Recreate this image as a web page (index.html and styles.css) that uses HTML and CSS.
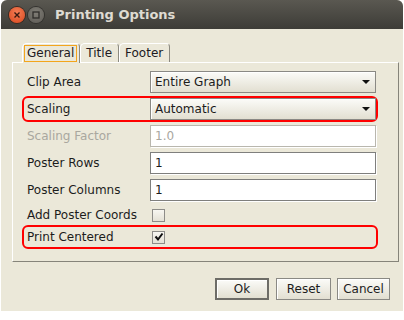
FILE: index.html
```html
<!DOCTYPE html>
<html lang="en">
<head>
  <meta charset="UTF-8" />
  <title>Printing Options</title>
  <link rel="stylesheet" href="styles.css">
</head>
<body>
  <div class="window">
    <div class="titlebar">
      <span class="wbtn close">
        <svg width="8" height="8" viewBox="0 0 8 8"><path d="M1.5 1.5 L6.5 6.5 M6.5 1.5 L1.5 6.5" stroke="#3a1a10" stroke-width="1.4"/></svg>
      </span>
      <span class="wbtn mini">
        <svg width="8" height="8" viewBox="0 0 8 8"><rect x="1" y="1" width="6" height="6" fill="none" stroke="#2e2d2a" stroke-width="1.3"/></svg>
      </span>
      <span class="title">Printing Options</span>
    </div>

    <div class="tabs">
      <div class="tab active"><span class="focus">General</span></div>
      <div class="tab">Title</div>
      <div class="tab">Footer</div>
    </div>

    <div class="panel">
      <div class="row">
        <label>Clip Area</label>
        <div class="combo">Entire Graph<span class="arrow"></span></div>
      </div>
      <div class="row marked">
        <label>Scaling</label>
        <div class="combo">Automatic<span class="arrow"></span></div>
      </div>
      <div class="row">
        <label class="disabled">Scaling Factor</label>
        <div class="field off">1.0</div>
      </div>
      <div class="row">
        <label>Poster Rows</label>
        <div class="field">1</div>
      </div>
      <div class="row">
        <label>Poster Columns</label>
        <div class="field">1</div>
      </div>
      <div class="row check-row first-check">
        <label>Add Poster Coords</label>
        <div><span class="check"></span></div>
      </div>
      <div class="row check-row marked">
        <label>Print Centered</label>
        <div>
          <span class="check">
            <svg width="10" height="10" viewBox="0 0 10 10"><path d="M1.5 4.5 L4 7.5 L8.5 1.5" fill="none" stroke="#111" stroke-width="2"/></svg>
          </span>
        </div>
      </div>
    </div>

    <div class="buttons">
      <button class="btn default">Ok</button>
      <button class="btn">Reset</button>
      <button class="btn">Cancel</button>
    </div>
  </div>
</body>
</html>
```

FILE: styles.css
```css
body {
  margin: 0;
  background: #fff;
  font-family: "DejaVu Sans", Verdana, sans-serif;
  font-size: 12px;
  color: #1c1c1c;
}
.window {
  margin-left: 1px;
  width: 402px;
  height: 311px;
  background: #ebe8d9;
  border-radius: 6px 6px 0 0;
  overflow: hidden;
}
.titlebar {
  height: 29px;
  display: flex;
  align-items: center;
  padding-left: 8px;
  background: linear-gradient(#5a5851, #3d3c37);
}
.wbtn {
  width: 16px;
  height: 16px;
  border-radius: 50%;
  display: flex;
  align-items: center;
  justify-content: center;
  margin-right: 3px;
}
.wbtn.close {
  background: radial-gradient(circle at 50% 35%, #f47e56, #d9461c);
  box-shadow: 0 0 0 1px #3a2a22;
}
.wbtn.mini {
  background: radial-gradient(circle at 50% 35%, #807d76, #5c5a54);
  box-shadow: 0 0 0 1px #33322e;
}
.title {
  margin-left: 8px;
  color: #dfdbd2;
  font-weight: bold;
  font-size: 13px;
}

.tabs {
  display: flex;
  margin: 14px 0 0 21px;
  position: relative;
  z-index: 1;
}
.tab {
  height: 18px;
  line-height: 18px;
  padding: 0 6px 0 5px;
  border-top: 1px solid #fff;
  border-left: 1px solid #fff;
  border-right: 1px solid #8c8a80;
  border-radius: 5px 4px 0 0;
  color: #201a22;
}
.tab.active {
  height: 19px;
  padding: 0 2px 0 1px;
  margin-bottom: -1px;
  background: #ebe8d9;
}
.focus {
  display: inline-block;
  line-height: 15px;
  padding: 0 2px;
  border: 1px solid #f3a51c;
}

.panel {
  margin-left: 11px;
  width: 376px;
  height: 190px;
  padding: 8px 0 0 9px;
  border-top: 1px solid #fff;
  border-left: 1px solid #fff;
  border-right: 1px solid #86847a;
  border-bottom: 1px solid #86847a;
  box-sizing: content-box;
}
.row {
  display: grid;
  grid-template-columns: 126px 226px;
  align-items: center;
  width: 352px;
  height: 22px;
  margin: 0 0 5px 2px;
}
.row label {
  padding-left: 3px;
}
.row label.disabled {
  color: #a9a79f;
}
.row.marked {
  outline: 2px solid #f00;
  outline-offset: 0;
  border-radius: 4px;
}
.check-row {
  height: 20px;
}
.check-row.first-check {
  margin-top: -1px;
  margin-bottom: 2px;
}

.combo {
  position: relative;
  height: 22px;
  box-sizing: border-box;
  padding-left: 4px;
  line-height: 20px;
  border: 1px solid #8a8984;
  background: linear-gradient(#fbfbf8, #e2dfd1);
  box-shadow: inset 1px 1px 0 #fff;
}
.arrow {
  position: absolute;
  right: 5px;
  top: 8px;
  border-left: 4px solid transparent;
  border-right: 4px solid transparent;
  border-top: 4px solid #111;
}
.field {
  height: 22px;
  box-sizing: border-box;
  padding-left: 4px;
  line-height: 20px;
  background: #fff;
  border: 1px solid #7f7f7d;
  box-shadow: 1px 1px 0 #fff;
}
.field.off {
  color: #a9a79f;
  border-color: #b9b7ae;
}
.check {
  display: flex;
  align-items: center;
  justify-content: center;
  width: 11px;
  height: 11px;
  margin-left: 2px;
  border: 1px solid #8d8c88;
  background: linear-gradient(#f7f6f1, #e4e1d5);
}

.buttons {
  display: flex;
  justify-content: flex-end;
  gap: 7px;
  margin-top: 16px;
  padding-right: 13px;
}
.btn {
  height: 22px;
  padding: 0;
  font-family: "DejaVu Sans", Verdana, sans-serif;
  font-size: 12px;
  color: #1c1c1c;
  border: 1px solid #8a8984;
  background: linear-gradient(#fbfbf8, #e2dfd1);
  box-shadow: inset 1px 1px 0 #fff;
  width: 55px;
}
.btn:last-child {
  width: 53px;
  margin-left: -1px;
}
.btn.default {
  width: 54px;
  border: 2px solid #6d6c67;
}
```
